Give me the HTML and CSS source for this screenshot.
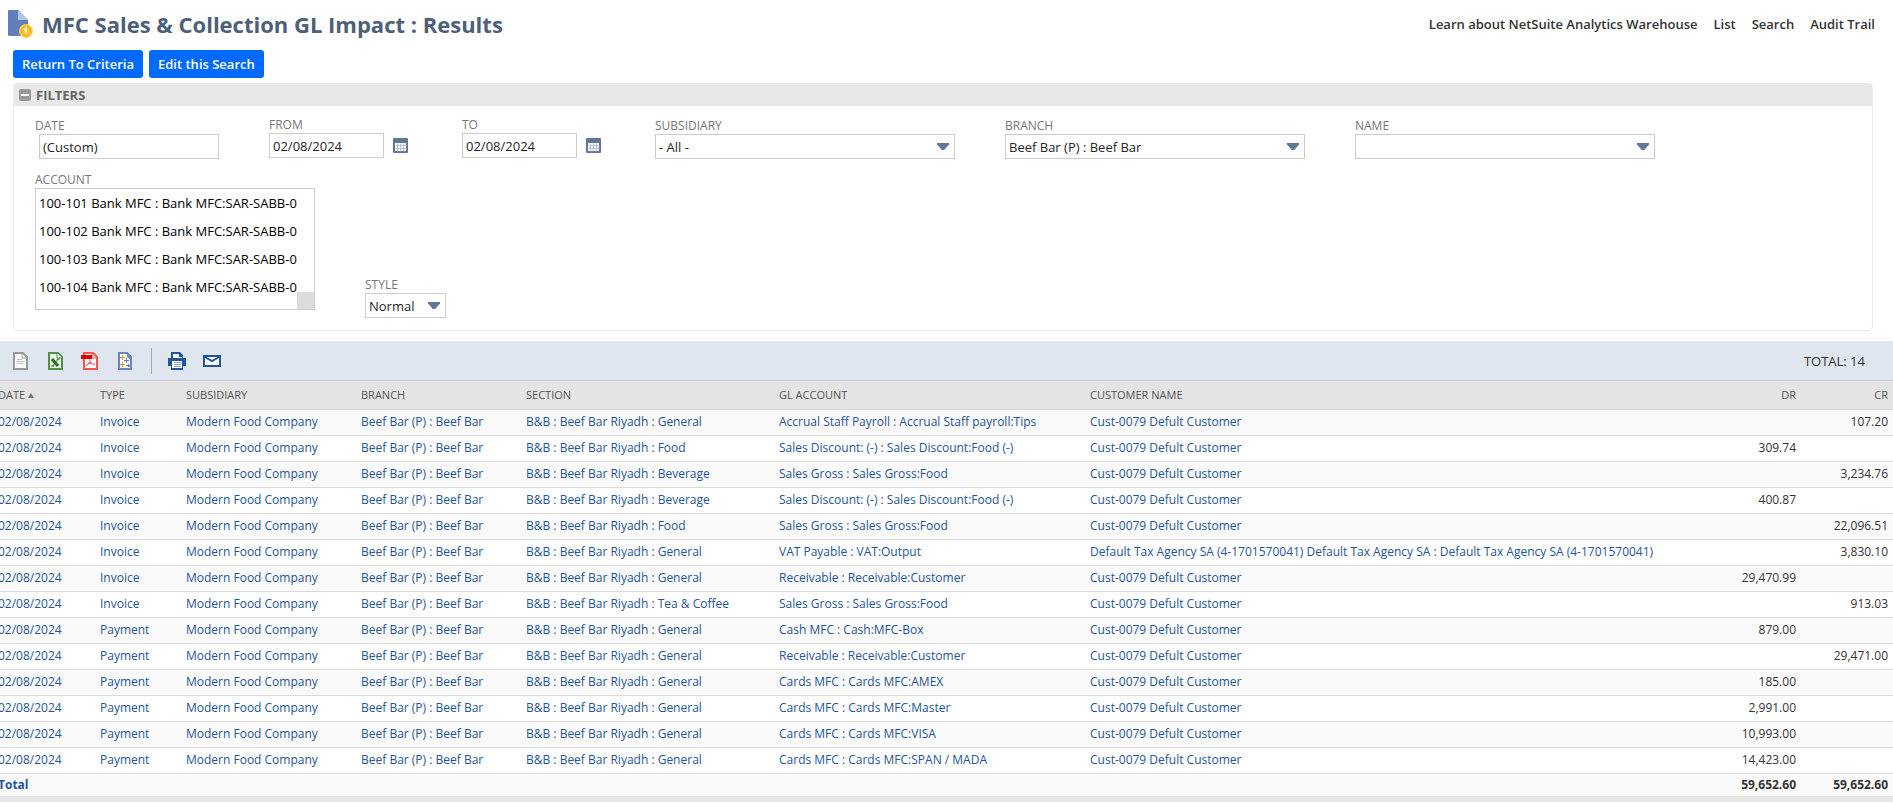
FILE: index.html
```html
<!DOCTYPE html>
<html lang="en">
<head>
    <meta charset="UTF-8">
    <meta name="viewport" content="width=device-width, initial-scale=1.0">
    <title>MFC Sales &amp; Collection GL Impact : Results</title>
    <link rel="stylesheet" href="styles.css">
</head>
<body>
    <header class="page-header">
        <svg class="page-icon" width="26" height="28" viewBox="0 0 26 28">
            <path d="M0 1a1 1 0 0 1 1-1h9l10 10v16H1a1 1 0 0 1-1-1z" fill="#607fbb"/>
            <path d="M10 0l10 10H10z" fill="#b3c3e0"/>
            <circle cx="18" cy="21" r="7" fill="#ffd34f"/>
            <circle cx="18" cy="21" r="5" fill="#fbc02d" stroke="#f5a623"/>
            <path d="M16 20l2-2v6" fill="none" stroke="#fff1b8" stroke-width="2"/>
        </svg>
        <h1>MFC Sales &amp; Collection GL Impact : Results</h1>
        <nav class="page-links">
            <a href="#">Learn about NetSuite Analytics Warehouse</a>
            <a href="#">List</a>
            <a href="#">Search</a>
            <a href="#">Audit Trail</a>
        </nav>
    </header>

    <div class="actions">
        <button type="button">Return To Criteria</button>
        <button type="button">Edit this Search</button>
    </div>

    <section class="filters">
        <h2>
            <svg width="12" height="12" viewBox="0 0 12 12"><rect width="12" height="12" rx="2" fill="#999"/><path d="M2 6h8" stroke="#fff" stroke-width="2"/></svg>
            FILTERS
        </h2>
        <form class="filter-form">
            <div class="filter-row">
                <div class="field field-date">
                    <label for="date">DATE</label>
                    <input type="text" id="date" value="(Custom)">
                </div>
                <div class="field field-day">
                    <label for="from">FROM</label>
                    <div class="day">
                        <input type="text" id="from" value="02/08/2024">
                        <svg width="15" height="15" viewBox="0 0 15 15"><rect width="15" height="15" rx="1" fill="#607799"/><path d="M2 5h11v8H2z" fill="#fff"/><path d="M2 7h11M2 10h11M4 5v8M7 5v8M10 5v8" transform="translate(.5 .5)" stroke="#b5c0d0"/></svg>
                    </div>
                </div>
                <div class="field field-day">
                    <label for="to">TO</label>
                    <div class="day">
                        <input type="text" id="to" value="02/08/2024">
                        <svg width="15" height="15" viewBox="0 0 15 15"><rect width="15" height="15" rx="1" fill="#607799"/><path d="M2 5h11v8H2z" fill="#fff"/><path d="M2 7h11M2 10h11M4 5v8M7 5v8M10 5v8" transform="translate(.5 .5)" stroke="#b5c0d0"/></svg>
                    </div>
                </div>
                <div class="field field-wide">
                    <label for="subsidiary">SUBSIDIARY</label>
                    <div class="dropdown"><select id="subsidiary"><option>- All -</option></select></div>
                </div>
                <div class="field field-wide">
                    <label for="branch">BRANCH</label>
                    <div class="dropdown"><select id="branch"><option>Beef Bar (P) : Beef Bar</option></select></div>
                </div>
                <div class="field field-wide">
                    <label for="name">NAME</label>
                    <div class="dropdown"><select id="name"><option></option></select></div>
                </div>
            </div>
            <div class="filter-row">
                <div class="field field-account">
                    <label for="account">ACCOUNT</label>
                    <div class="listbox">
                        <select id="account" multiple size="4">
                            <option>100-101 Bank MFC : Bank MFC:SAR-SABB-0</option>
                            <option>100-102 Bank MFC : Bank MFC:SAR-SABB-0</option>
                            <option>100-103 Bank MFC : Bank MFC:SAR-SABB-0</option>
                            <option>100-104 Bank MFC : Bank MFC:SAR-SABB-0</option>
                        </select>
                    </div>
                </div>
                <div class="field field-style">
                    <label for="style">STYLE</label>
                    <div class="dropdown"><select id="style"><option>Normal</option></select></div>
                </div>
            </div>
        </form>
    </section>

    <div class="toolbar">
        <button type="button" aria-label="Export CSV">
            <svg width="20" height="18" viewBox="0 0 20 18"><path d="M3 1h9l4 4v12H3z" fill="#fff" stroke="#999" stroke-width="2"/><path d="M11 1v5h5" fill="none" stroke="#999"/><path d="M6 7.500h5M6 9.500h8M6 11.500h6" stroke="#bbb"/></svg>
        </button>
        <button type="button" aria-label="Export Excel">
            <svg width="20" height="18" viewBox="0 0 20 18"><path d="M3 1h9l4 4v12H3z" fill="#f0f7e9" stroke="#4f9146" stroke-width="2"/><path d="M11 1v5h5" fill="#fff" stroke="#4f9146"/><path d="M12 7L7 14" stroke="#8fbc70" stroke-width="2"/><path d="M6 7l6 7" stroke="#277020" stroke-width="3"/><path d="M11 7h3M5 14h3" stroke="#277020"/></svg>
        </button>
        <button type="button" aria-label="Export PDF">
            <svg width="20" height="18" viewBox="0 0 20 18"><path d="M3 1h9l4 4v12H3z" fill="#fff" stroke="#ff5050" stroke-width="2"/><path d="M11 1v5h5" fill="none" stroke="#ff5050"/><path d="M0 3h11v4H0z" fill="#d90000"/><path d="M9 7v3l-4 4M9 10l2 2h3M7 12l4-1" fill="none" stroke="#ff5050"/></svg>
        </button>
        <button type="button" aria-label="Export to Tableau">
            <svg width="20" height="18" viewBox="0 0 20 18"><path d="M3 1h8l4 4v12H3z" fill="#fff" stroke="#6985c2" stroke-width="2"/><path d="M11 0l5 5v4l-5-4z" fill="#6985c2"/><path d="M4 5.500h5M6.500 3v5M4 12.500h5M6.500 10v5" stroke="#e0943b"/><path d="M8 8.500h5M10.500 6v5M10 13.500h4M12.500 12v3" stroke="#5b7fb5"/></svg>
        </button>
        <span class="divider"></span>
        <button type="button" aria-label="Print">
            <svg width="20" height="18" viewBox="0 0 20 18"><path d="M4 0h9l3 3v3h3v8h-3v4H4v-4H1V6h3z" fill="#23559c"/><path d="M6 2h6v3h3v1H6zM5 9h10v7H5z" fill="#fff"/><path d="M7 10.500h7M7 12.500h7M7 14.500h7" stroke="#8ca6cd"/></svg>
        </button>
        <button type="button" aria-label="Email">
            <svg width="20" height="18" viewBox="0 0 20 18"><path d="M2 4h16v10H2z" fill="#fff" stroke="#23559c" stroke-width="2"/><path d="M3 5l7 4 7-4" fill="none" stroke="#23559c" stroke-width="2"/></svg>
        </button>
        <span class="total">TOTAL: 14</span>
    </div>

    <table class="results">
        <colgroup>
            <col class="c-date"><col class="c-type"><col class="c-subsidiary"><col class="c-branch"><col class="c-section"><col class="c-account"><col><col class="c-dr"><col class="c-cr">
        </colgroup>
        <thead>
            <tr><th>DATE <span class="sort"></span></th><th>TYPE</th><th>SUBSIDIARY</th><th>BRANCH</th><th>SECTION</th><th>GL ACCOUNT</th><th>CUSTOMER NAME</th><th class="num">DR</th><th class="num">CR</th></tr>
        </thead>
        <tbody id="rows"></tbody>
        <tfoot>
            <tr><td><a href="#">Total</a></td><td></td><td></td><td></td><td></td><td></td><td></td><td class="num">59,652.60</td><td class="num">59,652.60</td></tr>
        </tfoot>
    </table>
    <script src="script.js"></script>
</body>
</html>
```
FILE: styles.css
```css
* {
    box-sizing: border-box;
}
body {
    font-family: "Open Sans", sans-serif;
    font-size: 13px;
    margin: 0;
    background-color: #fff;
    color: #333;
    overflow-x: hidden;
}
input, select, button {
    font-family: inherit;
    font-size: 13px;
    margin: 0;
}
svg {
    display: block;
    flex: none;
}
.page-header {
    display: flex;
    align-items: center;
    height: 50px;
    padding: 0 18px 3px 8px;
}
.page-header h1 {
    margin: 0 0 0 8px;
    font-size: 22px;
    line-height: 30px;
    font-weight: 700;
    color: #4d5f79;
}
.page-links {
    display: flex;
    gap: 16px;
    margin-left: auto;
}
.page-links a {
    color: #333;
    font-weight: 600;
    text-decoration: none;
}
.actions {
    display: flex;
    gap: 6px;
    padding: 0 13px;
}
.actions button {
    height: 28px;
    padding: 0 9px;
    border: none;
    border-radius: 3px;
    background-color: #006aff;
    color: #fff;
    font-weight: 600;
    cursor: pointer;
}
.filters {
    margin: 5px 20px 10px 13px;
    border: 1px solid #e8e8e8;
    border-radius: 5px;
}
.filters h2 {
    display: flex;
    align-items: center;
    gap: 5px;
    height: 22px;
    margin: 0;
    padding-left: 5px;
    background-color: #e8e8e8;
    color: #666;
    font-size: 13px;
    font-weight: 700;
}
.filter-form {
    padding: 11px 21px 12px;
}
.filter-row {
    display: flex;
    align-items: flex-end;
    gap: 50px;
    margin-bottom: 13px;
}
.filter-row:last-child {
    margin-bottom: 0;
}
.field label {
    display: block;
    height: 16px;
    line-height: 16px;
    font-size: 12px;
    color: #777;
}
.field input, .field select {
    display: block;
    width: 100%;
    height: 25px;
    padding: 0 3px;
    border: 1px solid #ccc;
    border-radius: 0;
    background-color: #fff;
    color: #262626;
    appearance: none;
}
.field-date {
    width: 184px;
}
.field-date input {
    width: 180px;
    margin-left: 4px;
}
.field-day {
    width: 143px;
    padding-bottom: 1px;
}
.day {
    display: flex;
    align-items: center;
    gap: 9px;
}
.field .day input {
    width: 115px;
}
.field-wide {
    width: 300px;
}
.dropdown {
    position: relative;
}
.dropdown::after {
    content: "";
    position: absolute;
    top: 9px;
    right: 6px;
    width: 12px;
    height: 7px;
    background-color: #607799;
    clip-path: polygon(0 0, 100% 0, 100% 20%, 60% 100%, 40% 100%, 0 20%);
    pointer-events: none;
}
.field-account {
    width: 280px;
    padding-bottom: 8px;
}
.listbox {
    position: relative;
}
.listbox::after {
    content: "";
    position: absolute;
    right: 1px;
    bottom: 1px;
    width: 17px;
    height: 17px;
    background-color: #dcdcdc;
}
.field .listbox select {
    height: 122px;
    padding: 5px 0 0;
    overflow: hidden;
}
.listbox option {
    height: 28px;
    padding: 0 3px;
    line-height: 28px;
    color: #000;
}
.field-style {
    width: 81px;
}
.toolbar {
    display: flex;
    align-items: center;
    gap: 15px;
    height: 40px;
    padding: 0 28px 0 11px;
    background-color: #dfe6ef;
    border-bottom: 1px solid #ccc;
}
.toolbar button {
    padding: 0;
    border: none;
    background: none;
    cursor: pointer;
}
.divider {
    width: 1px;
    height: 26px;
    background-color: #aaa;
}
.total {
    margin-left: auto;
}
.results {
    width: 100%;
    table-layout: fixed;
    border-collapse: collapse;
    border-bottom: 6px solid #e5e5e5;
}
.results th, .results td {
    height: 26px;
    padding: 0;
    border-bottom: 1px solid #d9d9d9;
    line-height: 18px;
    text-align: left;
    white-space: nowrap;
    font-size: 12px;
}
.results th {
    height: 28px;
    background-color: #e4e4e4;
    color: #555;
    font-size: 11px;
    font-weight: 400;
}
.results th:first-child, .results td:first-child {
    text-indent: -2px;
}
.results .num {
    text-align: right;
}
.results .num:last-child {
    padding-right: 5px;
}
.results tr:nth-child(odd) td {
    background-color: #fafafa;
}
.results a {
    color: #255599;
    text-decoration: none;
}
.results tfoot td {
    font-weight: 700;
}
.sort {
    display: inline-block;
    border: 3px solid transparent;
    border-top: none;
    border-bottom: 5px solid #777;
    vertical-align: 1px;
}
.c-date {
    width: 100px;
}
.c-type {
    width: 86px;
}
.c-subsidiary {
    width: 175px;
}
.c-branch {
    width: 165px;
}
.c-section {
    width: 253px;
}
.c-account {
    width: 311px;
}
.c-dr {
    width: 100px;
}
.c-cr {
    width: 97px;
}
```
FILE: script.js
```js
const customer = 'Cust-0079 Defult Customer';
const agency = 'Default Tax Agency SA (4-1701570041) Default Tax Agency SA : Default Tax Agency SA (4-1701570041)';

// type, section, GL account, customer, DR, CR
const entries = [
    ['Invoice', 'General', 'Accrual Staff Payroll : Accrual Staff payroll:Tips', customer, '', '107.20'],
    ['Invoice', 'Food', 'Sales Discount: (-) : Sales Discount:Food (-)', customer, '309.74', ''],
    ['Invoice', 'Beverage', 'Sales Gross : Sales Gross:Food', customer, '', '3,234.76'],
    ['Invoice', 'Beverage', 'Sales Discount: (-) : Sales Discount:Food (-)', customer, '400.87', ''],
    ['Invoice', 'Food', 'Sales Gross : Sales Gross:Food', customer, '', '22,096.51'],
    ['Invoice', 'General', 'VAT Payable : VAT:Output', agency, '', '3,830.10'],
    ['Invoice', 'General', 'Receivable : Receivable:Customer', customer, '29,470.99', ''],
    ['Invoice', 'Tea & Coffee', 'Sales Gross : Sales Gross:Food', customer, '', '913.03'],
    ['Payment', 'General', 'Cash MFC : Cash:MFC-Box', customer, '879.00', ''],
    ['Payment', 'General', 'Receivable : Receivable:Customer', customer, '', '29,471.00'],
    ['Payment', 'General', 'Cards MFC : Cards MFC:AMEX', customer, '185.00', ''],
    ['Payment', 'General', 'Cards MFC : Cards MFC:Master', customer, '2,991.00', ''],
    ['Payment', 'General', 'Cards MFC : Cards MFC:VISA', customer, '10,993.00', ''],
    ['Payment', 'General', 'Cards MFC : Cards MFC:SPAN / MADA', customer, '14,423.00', '']
];

const rows = document.getElementById('rows');

entries.forEach(([type, section, account, name, dr, cr]) => {
    const tr = rows.insertRow();
    const links = ['02/08/2024', type, 'Modern Food Company', 'Beef Bar (P) : Beef Bar', 'B&B : Beef Bar Riyadh : ' + section, account, name];
    links.forEach((text) => {
        const a = document.createElement('a');
        a.href = '#';
        a.textContent = text;
        tr.insertCell().appendChild(a);
    });
    [dr, cr].forEach((text) => {
        const td = tr.insertCell();
        td.className = 'num';
        td.textContent = text;
    });
});
```
